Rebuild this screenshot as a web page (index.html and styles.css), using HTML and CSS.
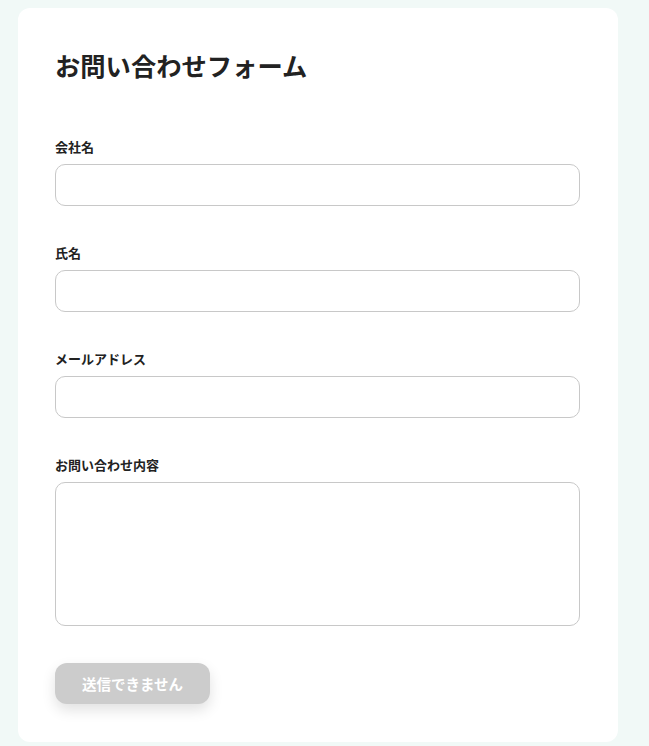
FILE: index.html
```html
<!DOCTYPE html>
<html lang="ja">
<head>
<meta charset="utf-8">
<title>お問い合わせフォーム</title>
<link rel="stylesheet" href="styles.css">
</head>
<body>
<main class="card">
  <h1 class="title">お問い合わせフォーム</h1>
  <form class="form">
    <div class="field">
      <label class="label" for="company">会社名</label>
      <input class="input" id="company" type="text">
    </div>
    <div class="field">
      <label class="label" for="name">氏名</label>
      <input class="input" id="name" type="text">
    </div>
    <div class="field">
      <label class="label" for="email">メールアドレス</label>
      <input class="input" id="email" type="email">
    </div>
    <div class="field">
      <label class="label" for="message">お問い合わせ内容</label>
      <textarea class="textarea" id="message"></textarea>
    </div>
    <div class="actions">
      <button class="submit" type="button" disabled>送信できません</button>
    </div>
  </form>
</main>
</body>
</html>
```
FILE: styles.css
```css
* { box-sizing: border-box; }
html, body { height: 100%; }
body {
  margin: 0;
  padding: 8px 0 0 18px;
  background: #f1f9f7;
  font-family: "Noto Sans CJK JP", "Noto Sans", sans-serif;
  color: #222;
  overflow: hidden;
}
.card {
  width: 600px;
  height: 734px;
  background: #fff;
  border-radius: 12px;
  padding: 40px 37px 0 37px;
}
.title {
  margin: 0;
  font-size: 25.3px;
  line-height: 34px;
  font-weight: 700;
  color: #222;
}
.form {
  display: flex;
  flex-direction: column;
  gap: 37px;
  margin-top: 55px;
}
.field {
  display: flex;
  flex-direction: column;
  gap: 7px;
}
.label {
  font-size: 13px;
  line-height: 20px;
  font-weight: 700;
  color: #222;
}
.input, .textarea {
  width: 525px;
  border: 1px solid #c8c8c8;
  border-radius: 10px;
  background: #fff;
  font: inherit;
  display: block;
}
.input { height: 42px; }
.textarea { height: 144px; resize: none; }
.submit {
  width: 155px;
  height: 41px;
  border: none;
  border-radius: 12px;
  background: #cccccc;
  color: #fff;
  font-family: inherit;
  font-size: 14.5px;
  font-weight: 700;
  box-shadow: 0 6px 14px rgba(0, 0, 0, 0.12);
}
```
